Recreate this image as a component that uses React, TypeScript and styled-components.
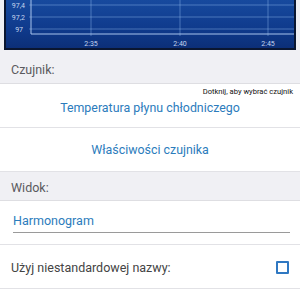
import React from "react";
import styled, { createGlobalStyle } from "styled-components";

const Global = createGlobalStyle`
  html, body { margin: 0; padding: 0; background: #f0f0f4; }
  body { font-family: Roboto, "Noto Sans", Arial, sans-serif; width: 300px; height: 300px; overflow: hidden; }
`;

const Page = styled.div`
  width: 300px;
  height: 300px;
  background: #f0f0f4;
  display: flex;
  flex-direction: column;
`;

const ChartFrame = styled.div`
  margin: 0 4px;
  height: 50px;
  box-sizing: border-box;
  border: 2px solid #0a1631;
  border-top: none;
  background: linear-gradient(180deg, #174a9e 0%, #0f3a8c 60%, #0c2f78 100%);
  flex-shrink: 0;
  svg { display: block; }
`;

const SectionHeader = styled.div<{ $top: number; $bottom: number }>`
  padding: ${(p) => p.$top}px 11px ${(p) => p.$bottom}px;
  font-size: 12.5px;
  line-height: 14px;
  color: #5a5a5e;
  border-bottom: 1px solid #dedee2;
`;

const Row = styled.div`
  background: #ffffff;
  height: 43px;
  border-bottom: 1px solid #e2e2e6;
  box-sizing: content-box;
  display: flex;
  flex-direction: column;
  justify-content: center;
  position: relative;
`;

const Filler = styled.div`
  background: #ffffff;
  flex: 1;
`;

const Hint = styled.div`
  position: absolute;
  top: 4px;
  right: 7px;
  font-size: 7.6px;
  line-height: 8px;
  color: #111;
`;

const LinkText = styled.div<{ $offset?: number }>`
  text-align: center;
  font-size: 12.4px;
  line-height: 14px;
  color: #2c7cbc;
  margin-top: ${(p) => p.$offset ?? 0}px;
`;

const FieldRow = styled(Row)`
  padding: 0 10px 0 13px;
  align-items: stretch;
`;

const Field = styled.div`
  font-size: 12.5px;
  line-height: 14px;
  color: #2c7cbc;
  padding-bottom: 4px;
  border-bottom: 1px solid #9a9a9a;
  margin-top: 2px;
`;

const CheckRow = styled(Row)`
  flex-direction: row;
  align-items: center;
  justify-content: space-between;
  padding: 0 11px 0 11px;
`;

const Label = styled.span`
  font-size: 12.5px;
  line-height: 14px;
  color: #444;
  margin-top: 2px;
`;

const CheckBox = styled.span`
  width: 9px;
  height: 9px;
  border: 2px solid #2f78c2;
  border-radius: 1px;
  margin-top: 2px;
`;

const Chart = () => {
  const grid = "rgba(150,190,240,0.55)";
  const label = "#c4d4ee";
  return (
    <svg width="288" height="48" viewBox="0 0 288 48">
      {[5, 17, 29].map((y) => (
        <line key={y} x1="23" x2="288" y1={y} y2={y} stroke={grid} strokeWidth="0.8" />
      ))}
      {[85, 174, 262].map((x) => (
        <line key={x} x1={x} x2={x} y1="0" y2="36" stroke={grid} strokeWidth="0.8" />
      ))}
      <line x1="25" x2="25" y1="0" y2="34" stroke="#a8c4ec" strokeWidth="1" />
      <line x1="25" x2="288" y1="34" y2="34" stroke="#a8c4ec" strokeWidth="1" />
      <g fill={label} fontSize="7" fontFamily="Roboto, Arial, sans-serif" textAnchor="end">
        <text x="19" y="7.5">97,4</text>
        <text x="19" y="19.5">97,2</text>
        <text x="17" y="31.5">97</text>
      </g>
      <g fill={label} fontSize="7" fontFamily="Roboto, Arial, sans-serif" textAnchor="middle">
        <text x="85" y="46">2:35</text>
        <text x="174" y="46">2:40</text>
        <text x="262" y="46">2:45</text>
      </g>
    </svg>
  );
};

export default function App() {
  return (
    <>
      <Global />
      <Page>
        <ChartFrame>
          <Chart />
        </ChartFrame>
        <SectionHeader $top={13} $bottom={6}>Czujnik:</SectionHeader>
        <Row>
          <Hint>Dotknij, aby wybrać czujnik</Hint>
          <LinkText $offset={4}>Temperatura płynu chłodniczego</LinkText>
        </Row>
        <Row>
          <LinkText>Właściwości czujnika</LinkText>
        </Row>
        <SectionHeader $top={9} $bottom={5}>Widok:</SectionHeader>
        <FieldRow>
          <Field>Harmonogram</Field>
        </FieldRow>
        <CheckRow>
          <Label>Użyj niestandardowej nazwy:</Label>
          <CheckBox />
        </CheckRow>
        <Filler />
      </Page>
    </>
  );
}
